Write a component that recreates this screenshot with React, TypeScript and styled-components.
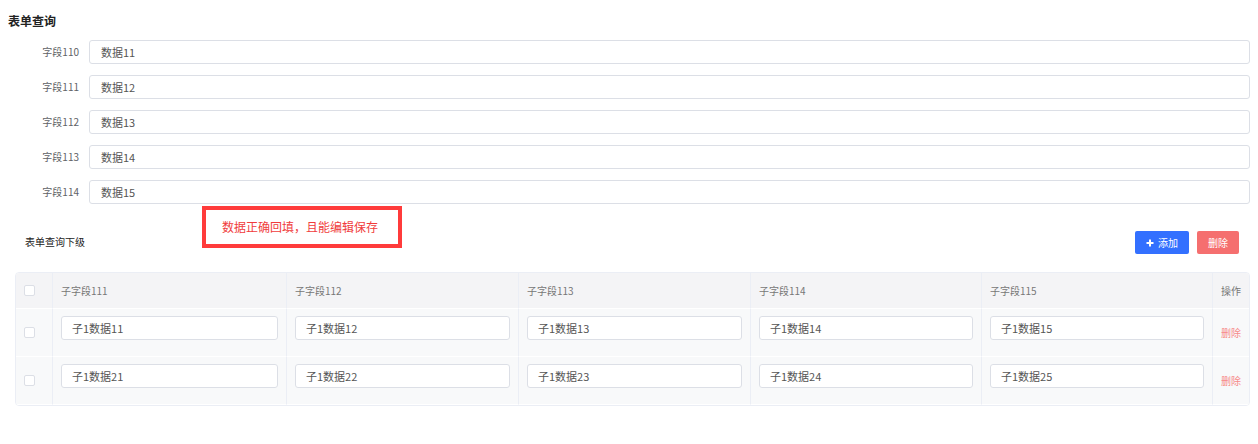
import React from 'react'
import styled, { createGlobalStyle } from 'styled-components'

const GlobalStyle = createGlobalStyle`
  body {
    margin: 0;
    background: #fff;
    font-family: "Noto Sans CJK SC", "Noto Sans", "Liberation Sans", sans-serif;
    color: #333;
  }
`

const Page = styled.div`
  position: relative;
  padding: 11px 8px 0 8px;
`

const Title = styled.h3`
  margin: 0;
  font-size: 12px;
  font-weight: bold;
  line-height: 20px;
  color: #222;
`

const Form = styled.div`
  display: grid;
  grid-template-columns: 71px 1fr;
  column-gap: 10px;
  row-gap: 11px;
  margin-top: 9px;
`

const Label = styled.label`
  font-size: 10px;
  color: #606266;
  text-align: right;
  line-height: 24px;
`

const Input = styled.div`
  box-sizing: border-box;
  height: 24px;
  border: 1px solid #dcdfe6;
  border-radius: 3px;
  background: #fff;
  padding-left: 11px;
  font-size: 11px;
  line-height: 22px;
  color: #555;
`

const Note = styled.div`
  position: absolute;
  left: 202px;
  top: 206px;
  width: 200px;
  height: 42px;
  box-sizing: border-box;
  border: 4px solid #ff3b3b;
  background: #fff;
  color: #f03c3c;
  font-size: 12px;
  padding-left: 16px;
  line-height: 34px;
`

const Toolbar = styled.div`
  display: flex;
  align-items: center;
  justify-content: space-between;
  padding: 0 11px 0 17px;
  margin-top: 27px;
  height: 23px;
`

const SubTitle = styled.span`
  font-size: 10px;
  color: #222;
  margin-top: -2px;
`

const Actions = styled.div`
  display: flex;
  gap: 8px;
`

const Button = styled.button<{ $kind: 'primary' | 'danger' }>`
  height: 23px;
  border: none;
  border-radius: 2px;
  padding: 0 11px;
  font-family: inherit;
  font-size: 10px;
  color: #fff;
  display: flex;
  align-items: center;
  gap: 4px;
  background: ${p => (p.$kind === 'primary' ? '#3370ff' : '#f56f6f')};
`

const Table = styled.div`
  margin: 18px 0 0 7px;
  border: 1px solid #ebeef5;
  border-radius: 4px;
  overflow: hidden;
  display: grid;
  grid-template-columns: 37px 234px 232px 232px 231px 231px 1fr;
`

const Cell = styled.div<{ $head?: boolean }>`
  box-sizing: border-box;
  height: ${p => (p.$head ? 36 : 48)}px;
  padding: ${p => (p.$head ? '0 8px' : '7px 8px 0 8px')};
  background: ${p => (p.$head ? '#f4f4f6' : '#f8f9fa')};
  border-right: 1px solid #ebeef5;
  border-bottom: 1px solid #ffffff;
  display: flex;
  align-items: ${p => (p.$head ? 'center' : 'flex-start')};
  font-size: 10px;
  color: #777;
  &:nth-child(7n) {
    border-right: none;
  }
`

const CheckCell = styled(Cell)`
  align-items: center;
  padding: 0 0 0 8px;
`

const OpCell = styled(Cell)`
  align-items: center;
  padding: 0 8px;
`

const Check = styled.span`
  width: 11px;
  height: 11px;
  box-sizing: border-box;
  border: 1px solid #dcdfe6;
  border-radius: 2px;
  background: #fff;
`

const DeleteLink = styled.span`
  color: #f78989;
  font-size: 10px;
`

const CellInput = styled(Input)`
  width: 100%;
  padding-left: 10px;
`

const fields = [
  ['字段110', '数据11'],
  ['字段111', '数据12'],
  ['字段112', '数据13'],
  ['字段113', '数据14'],
  ['字段114', '数据15'],
]

const columns = ['子字段111', '子字段112', '子字段113', '子字段114', '子字段115']

const rows = [
  ['子1数据11', '子1数据12', '子1数据13', '子1数据14', '子1数据15'],
  ['子1数据21', '子1数据22', '子1数据23', '子1数据24', '子1数据25'],
]

const PlusIcon = () => (
  <svg width="8" height="8" viewBox="0 0 8 8">
    <path d="M4 0.5v7M0.5 4h7" stroke="#fff" strokeWidth="2" />
  </svg>
)

export default function App() {
  return (
    <Page>
      <GlobalStyle />
      <Title>表单查询</Title>
      <Form>
        {fields.map(([label, value]) => (
          <React.Fragment key={label}>
            <Label>{label}</Label>
            <Input>{value}</Input>
          </React.Fragment>
        ))}
      </Form>
      <Note>数据正确回填，且能编辑保存</Note>
      <Toolbar>
        <SubTitle>表单查询下级</SubTitle>
        <Actions>
          <Button $kind="primary"><PlusIcon />添加</Button>
          <Button $kind="danger">删除</Button>
        </Actions>
      </Toolbar>
      <Table>
        <CheckCell $head><Check /></CheckCell>
        {columns.map(c => <Cell $head key={c}>{c}</Cell>)}
        <OpCell $head>操作</OpCell>
        {rows.map((row, i) => (
          <React.Fragment key={i}>
            <CheckCell><Check /></CheckCell>
            {row.map(v => (
              <Cell key={v}><CellInput>{v}</CellInput></Cell>
            ))}
            <OpCell><DeleteLink>删除</DeleteLink></OpCell>
          </React.Fragment>
        ))}
      </Table>
    </Page>
  )
}
